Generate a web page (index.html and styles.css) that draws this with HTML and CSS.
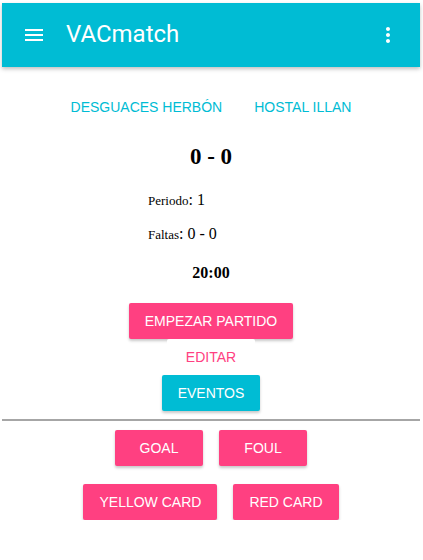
FILE: index.html
```html
<!DOCTYPE html>
<html>
<head>
<meta charset="utf-8">
<link rel="stylesheet" href="styles.css">
</head>
<body>
<header class="toolbar">
  <button class="icon-btn" aria-label="menu">
    <svg width="24" height="24" viewBox="0 0 24 24"><path d="M3 18h18v-2H3v2zm0-5h18v-2H3v2zm0-7v2h18V6H3z" fill="#fff"/></svg>
  </button>
  <span class="title">VACmatch</span>
  <span class="spacer"></span>
  <button class="icon-btn" aria-label="more">
    <svg width="24" height="24" viewBox="0 0 24 24"><path d="M12 8c1.1 0 2-.9 2-2s-.9-2-2-2-2 .9-2 2 .9 2 2 2zm0 2c-1.1 0-2 .9-2 2s.9 2 2 2 2-.9 2-2-.9-2-2-2zm0 6c-1.1 0-2 .9-2 2s.9 2 2 2 2-.9 2-2-.9-2-2-2z" fill="#fff"/></svg>
  </button>
</header>
<main class="content">
  <div class="teams">
    <button class="flat cyan">DESGUACES HERBÓN</button>
    <button class="flat cyan">HOSTAL ILLAN</button>
  </div>
  <h2 class="score">0 - 0</h2>
  <div class="info">
    <p class="line"><span class="label">Periodo</span>: 1</p>
    <p class="line"><span class="label">Faltas</span>: 0 - 0</p>
  </div>
  <div class="clock">20:00</div>
  <div class="actions">
    <button class="raised pink">EMPEZAR PARTIDO</button>
    <button class="flat pink-text">EDITAR</button>
    <button class="raised cyan-bg">EVENTOS</button>
  </div>
  <hr class="divider">
  <div class="row row-first">
    <button class="raised pink">GOAL</button>
    <button class="raised pink">FOUL</button>
  </div>
  <div class="row">
    <button class="raised pink">YELLOW CARD</button>
    <button class="raised pink">RED CARD</button>
  </div>
</main>
</body>
</html>
```
FILE: styles.css
```css
html, body {
  margin: 0;
  padding: 0;
  background: #fff;
}
body {
  padding: 3px 3px 0 2px;
  font-family: "Liberation Serif", serif;
}
.toolbar {
  height: 64px;
  background: #00bcd4;
  display: flex;
  align-items: center;
  padding: 0 10px 0 10px;
  box-shadow: 0 2px 4px rgba(0,0,0,0.25);
  color: #fff;
}
.toolbar .icon-btn {
  border: 0;
  background: transparent;
  width: 44px;
  min-width: 0;
  height: 44px;
  padding: 0;
  display: flex;
  align-items: center;
  justify-content: center;
}
.title {
  font-family: Roboto, sans-serif;
  font-size: 24px;
  margin-left: 10px;
  margin-top: -2px;
}
.spacer { flex: 1; }
.content {
  display: flex;
  flex-direction: column;
  align-items: stretch;
}
button {
  font-family: "Liberation Sans", Arial, sans-serif;
  font-size: 14px;
  border: 0;
  border-radius: 2px;
  height: 36px;
  padding: 0 16px;
  min-width: 88px;
  background: transparent;
}
.teams {
  display: flex;
  justify-content: center;
  margin-top: 22px;
}
.flat.cyan { color: #00bcd4; }
.score {
  font-family: "Liberation Serif", serif;
  font-weight: bold;
  font-size: 23px;
  text-align: center;
  margin: 16px 0 0;
  line-height: 32px;
}
.info {
  margin: 18px 0 0 146px;
}
.line {
  margin: 0;
  font-size: 16px;
  line-height: 18px;
  color: #000;
}
.line + .line { margin-top: 15px; }
.label { font-size: 13px; }
.clock {
  text-align: center;
  font-weight: bold;
  font-size: 16px;
  margin-top: 20px;
  line-height: 18px;
}
.actions {
  display: flex;
  flex-direction: column;
  align-items: center;
  margin-top: 21px;
}
.raised {
  color: #fff;
  box-shadow: 0 2px 3px rgba(0,0,0,0.22);
}
.pink { background: #ff4081; }
.cyan-bg { background: #00bcd4; }
.pink-text { color: #ff4081; background: #fff; position: relative; }
.divider {
  margin: 8px 0 0;
  border: 0;
  border-top: 2px solid #a6a6a6;
  height: 0;
}
.row {
  display: flex;
  justify-content: center;
  gap: 16px;
  margin-top: 18px;
}
.row-first { margin-top: 9px; }
```
